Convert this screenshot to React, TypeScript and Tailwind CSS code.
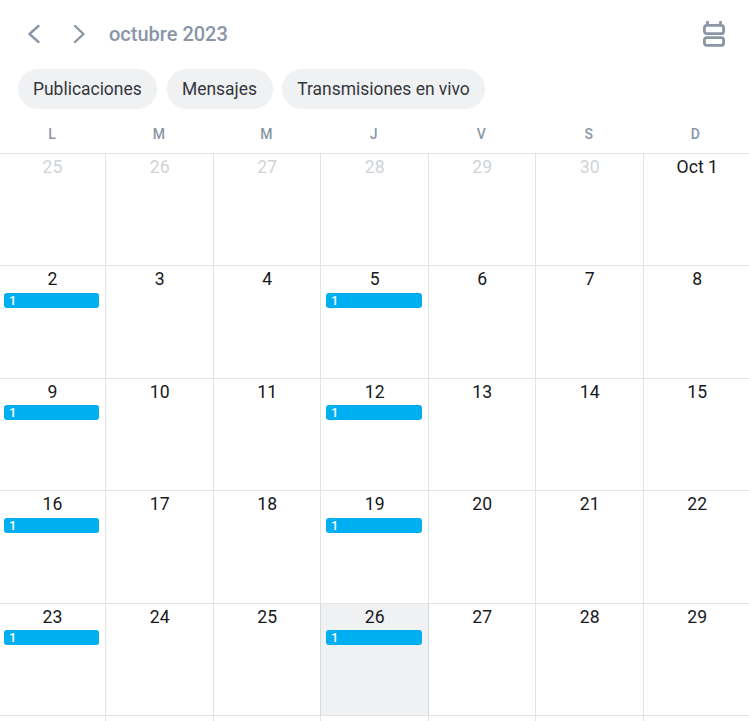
const weekdays = ['L', 'M', 'M', 'J', 'V', 'S', 'D']

type Day = { label: string; muted?: boolean; count?: number; today?: boolean }

const weeks: Day[][] = [
  [
    { label: '25', muted: true },
    { label: '26', muted: true },
    { label: '27', muted: true },
    { label: '28', muted: true },
    { label: '29', muted: true },
    { label: '30', muted: true },
    { label: 'Oct 1' },
  ],
  [
    { label: '2', count: 1 },
    { label: '3' },
    { label: '4' },
    { label: '5', count: 1 },
    { label: '6' },
    { label: '7' },
    { label: '8' },
  ],
  [
    { label: '9', count: 1 },
    { label: '10' },
    { label: '11' },
    { label: '12', count: 1 },
    { label: '13' },
    { label: '14' },
    { label: '15' },
  ],
  [
    { label: '16', count: 1 },
    { label: '17' },
    { label: '18' },
    { label: '19', count: 1 },
    { label: '20' },
    { label: '21' },
    { label: '22' },
  ],
  [
    { label: '23', count: 1 },
    { label: '24' },
    { label: '25' },
    { label: '26', count: 1, today: true },
    { label: '27' },
    { label: '28' },
    { label: '29' },
  ],
  [
    { label: '' },
    { label: '' },
    { label: '' },
    { label: '' },
    { label: '' },
    { label: '' },
    { label: '' },
  ],
]

function Chip({ children }: { children: string }) {
  return (
    <button className="h-10 rounded-full bg-[#f0f1f3] pl-[15px] pr-[15.6px] text-[17.46px] text-[#33373d]">
      {children}
    </button>
  )
}

export default function App() {
  return (
    <div className="h-[721px] w-[749px] overflow-hidden bg-white font-['Roboto',sans-serif]">
      <div className="flex h-[69px] items-center pl-[23px] pr-[24px] pb-[2px]">
        <svg width="22" height="22" viewBox="0 0 22 22" fill="none" stroke="#8a96a6" strokeWidth="2.4" strokeLinecap="round" strokeLinejoin="round">
          <path d="M15.5 3 L6.5 11 L15.5 19" />
        </svg>
        <svg className="ml-[23px]" width="22" height="22" viewBox="0 0 22 22" fill="none" stroke="#8a96a6" strokeWidth="2.4" strokeLinecap="round" strokeLinejoin="round">
          <path d="M7 3 L15.5 11 L7 19" />
        </svg>
        <span className="ml-[19px] text-[20px] font-medium text-[#8a96a6]">octubre 2023</span>
        <svg className="ml-auto" width="22" height="26" viewBox="0 0 22 26" fill="none" stroke="#8a96a6" strokeWidth="2.8" strokeLinecap="round" strokeLinejoin="round">
          <path d="M4.5 1 V4 M17.5 1 V4" />
          <rect x="1.4" y="4.3" width="19.2" height="8.4" rx="2.5" />
          <rect x="1.4" y="16.6" width="19.2" height="7.8" rx="2.5" />
        </svg>
      </div>

      <div className="flex gap-[9.7px] pl-[18px]">
        <Chip>Publicaciones</Chip>
        <Chip>Mensajes</Chip>
        <Chip>Transmisiones en vivo</Chip>
      </div>

      <div className="grid h-[44.5px] w-[749px] grid-cols-[106px_repeat(5,107.5px)_105.5px] border-b border-[#e3e4e6] pt-[16px]">
        {weekdays.map((d, i) => (
          <div key={i} className="pr-[2px] text-center text-[14px] leading-[18px] font-medium text-[#8a96a6]">
            {d}
          </div>
        ))}
      </div>

      {weeks.map((week, w) => (
        <div
          key={w}
          className="grid h-[112.5px] w-[749px] grid-cols-[106px_repeat(5,107.5px)_105.5px] border-b border-[#e3e4e6]"
        >
          {week.map((day, i) => (
            <div
              key={i}
              className={
                'relative border-r px-[4px] pt-[3px] last:border-r-0 ' +
                (day.today ? 'border-[#d3d9df] bg-[#f0f1f3]' : 'border-[#e3e4e6]')
              }
            >
              {day.today ? (
                <div className="absolute top-0 bottom-0 left-[-1px] w-px bg-[#d3d9df]" />
              ) : null}
              <div
                className={
                  'text-center text-[17.6px] leading-[21px] ' +
                  (i === 0 ? '' : i === 6 ? 'pl-[2px] ' : 'pl-[1px] ') +
                  (day.muted ? 'text-[#d0d3d7]' : 'text-[#16191d]')
                }
              >
                {day.label}
              </div>
              {day.count ? (
                <div
                  className={
                    'mt-[2.9px] mr-[2px] flex h-[15px] items-center rounded-[3px] bg-[#00aff0] pl-[5px] text-[13px] font-medium text-white ' +
                    (i === 0 ? '' : 'ml-[1px]')
                  }
                >
                  {day.count}
                </div>
              ) : null}
            </div>
          ))}
        </div>
      ))}
    </div>
  )
}
